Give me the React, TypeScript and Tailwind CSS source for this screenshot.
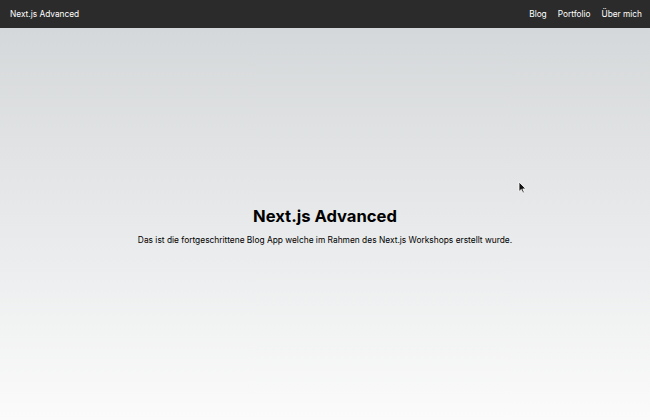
const navLinks = ['Blog', 'Portfolio', 'Über mich'];

const Cursor = () => (
  <svg className="absolute left-[518px] top-[181px]" width="9" height="13" viewBox="0 0 9 13">
    <path d="M1 1 L1 10.5 L3.3 8.4 L4.9 12 L6.3 11.4 L4.8 7.9 L7.8 7.9 Z" fill="#111" stroke="#fff" strokeWidth="0.8" />
  </svg>
);

export default function App() {
  return (
    <div className="relative flex h-[420px] w-[650px] flex-col overflow-hidden font-['Inter',sans-serif]">
      <nav className="flex h-[28px] shrink-0 items-center justify-between bg-[#2b2b2b] pl-[10px] pr-[8px] text-[8.3px] text-white">
        <span>Next.js Advanced</span>
        <div className="flex items-center gap-[11px]">
          {navLinks.map(link => (
            <a key={link} href="#">
              {link}
            </a>
          ))}
        </div>
      </nav>
      <main className="flex flex-1 flex-col items-center justify-center bg-gradient-to-b from-[#d5d8da] to-[#fbfbfb] pt-[2px]">
        <h1 className="text-[16.6px] font-bold leading-[22px] text-black">Next.js Advanced</h1>
        <p className="mt-[7px] text-[8.4px] leading-[12px] text-black">
          Das ist die fortgeschrittene Blog App welche im Rahmen des Next.js Workshops erstellt wurde.
        </p>
      </main>
      <Cursor />
    </div>
  );
}
